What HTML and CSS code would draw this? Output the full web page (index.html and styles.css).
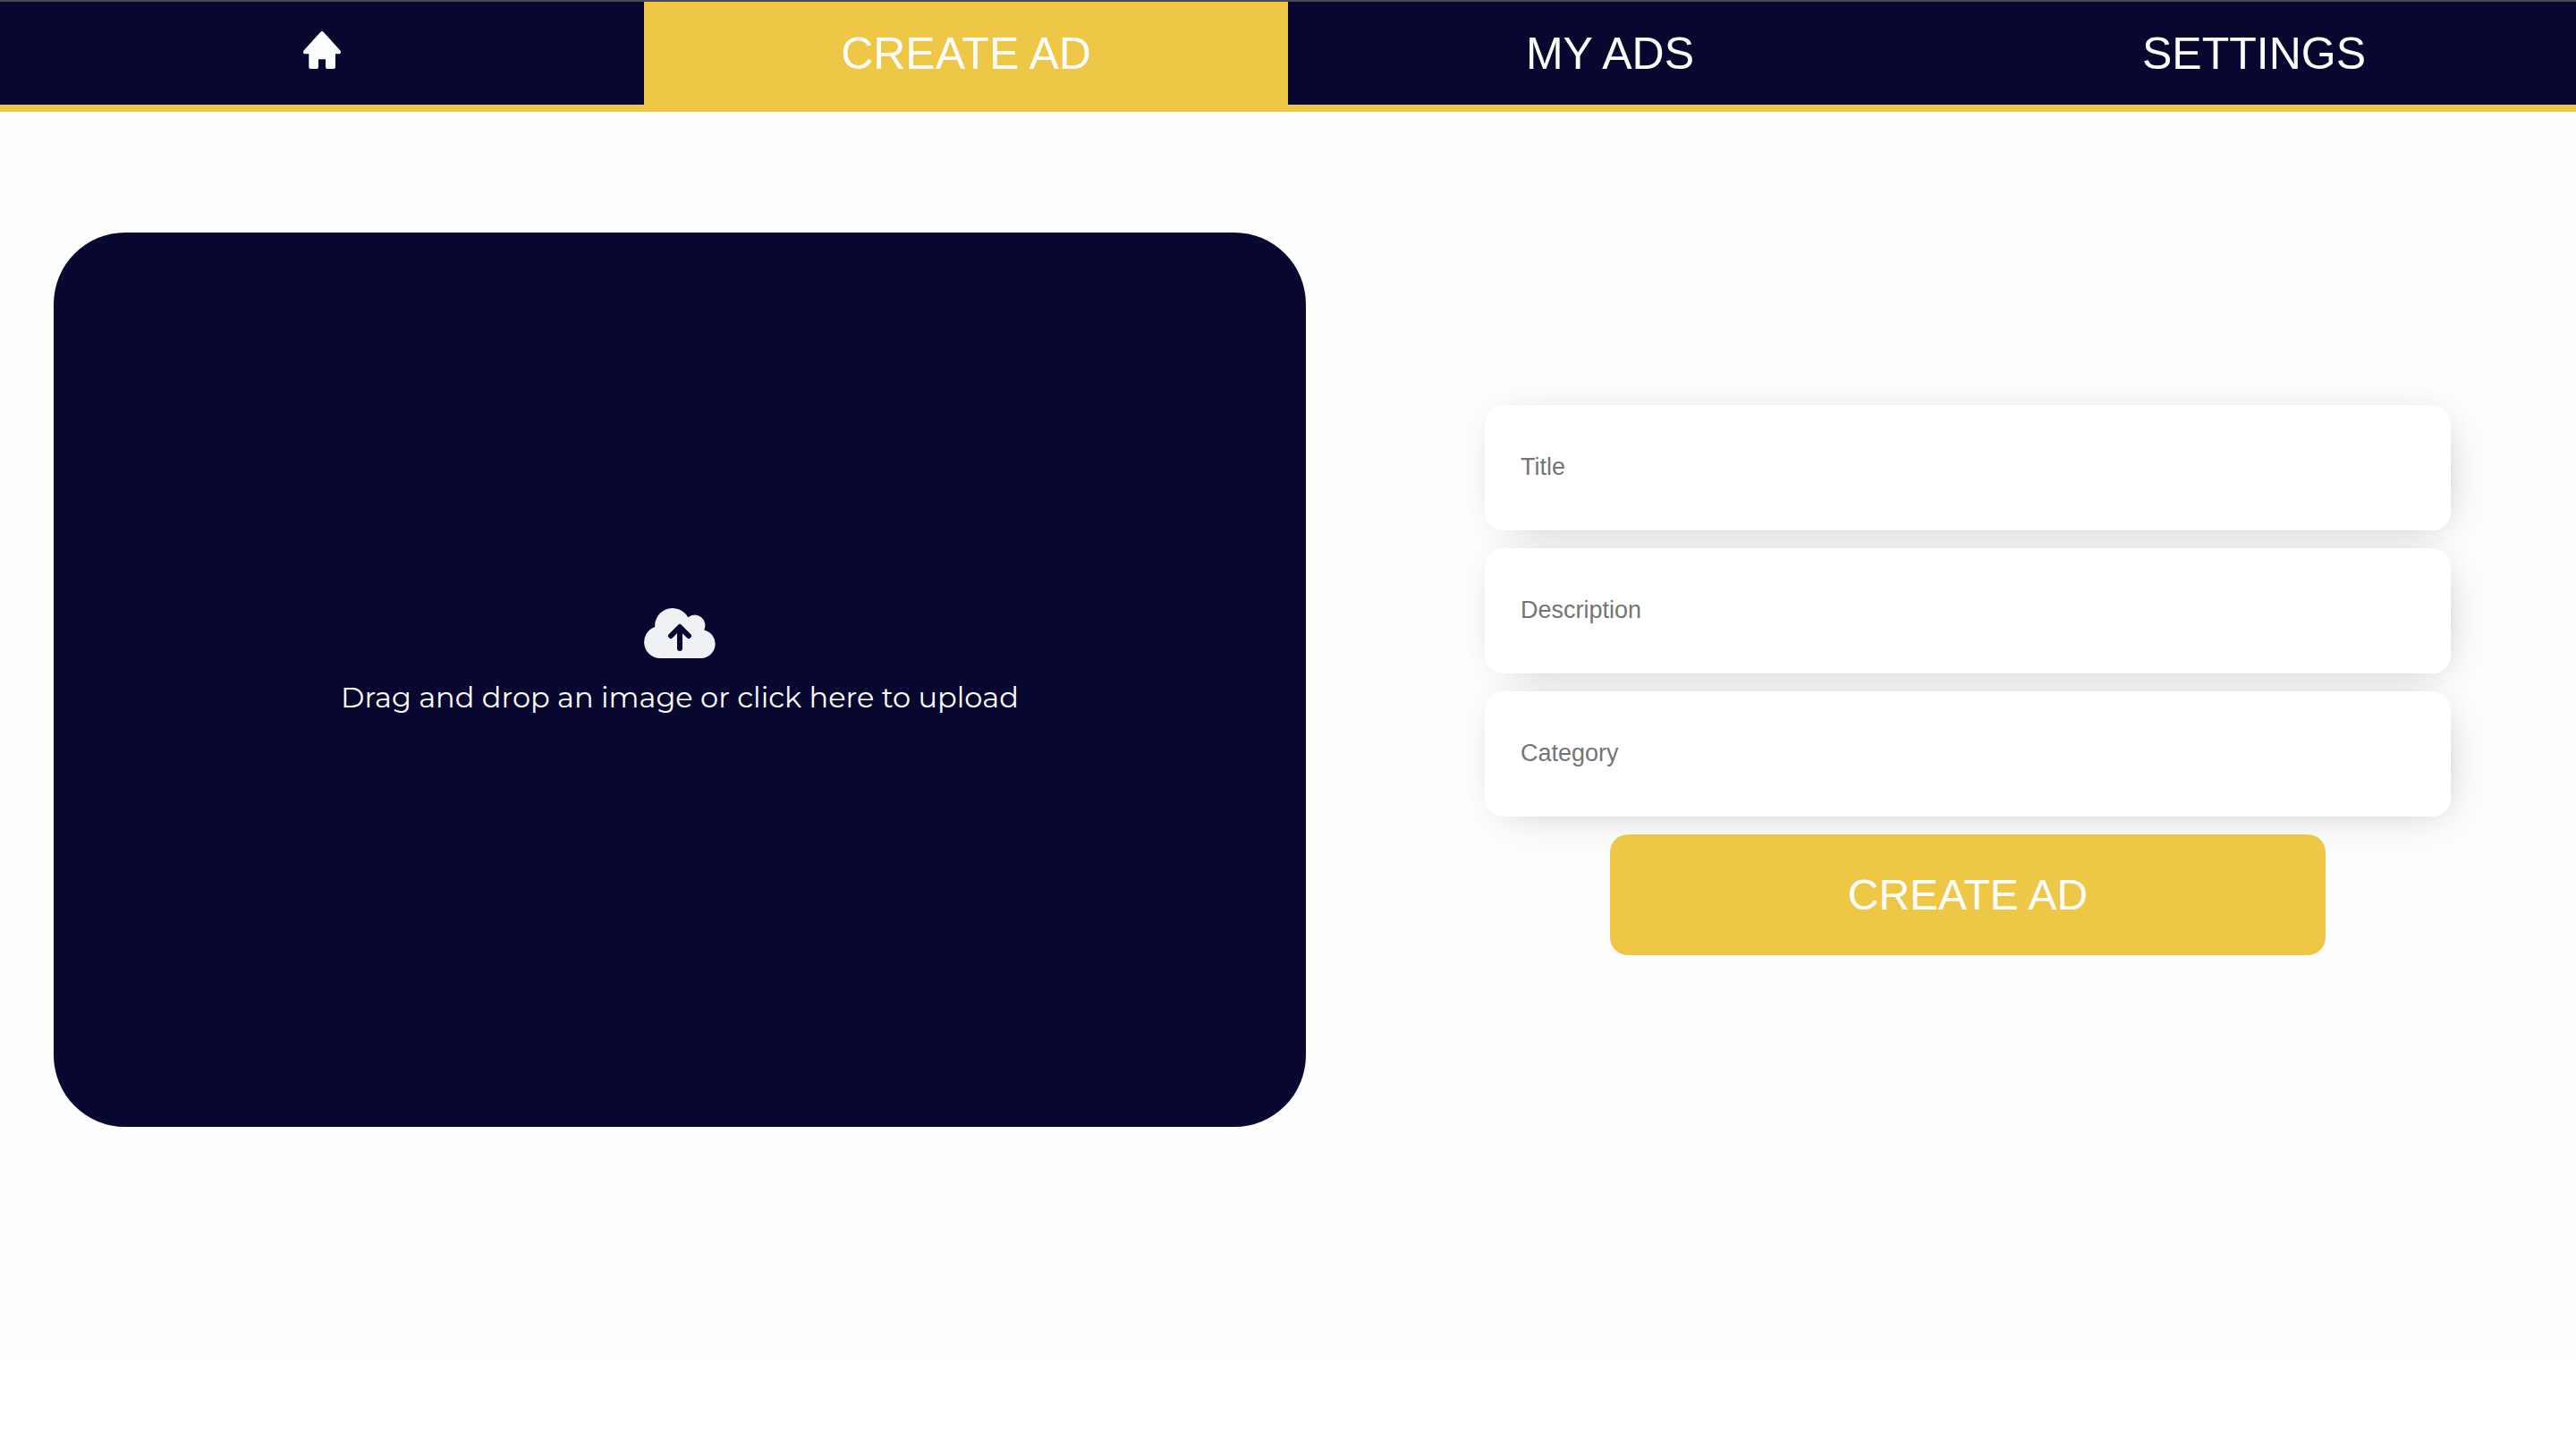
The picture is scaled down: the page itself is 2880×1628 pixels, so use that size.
FILE: index.html
```html
<!DOCTYPE html>
<html lang="en">
<head>
  <meta charset="utf-8">
  <meta name="viewport" content="width=device-width, initial-scale=1">
  <title>Create Ad</title>
  <link rel="stylesheet" href="styles.css">
</head>
<body>
  <nav class="nav">
    <a class="nav-link" href="#home" aria-label="Home">
      <svg class="home-icon" viewBox="0 0 42 50" aria-hidden="true">
        <path d="M19.4.7a2.3 2.3 0 0 1 3.2 0L41.4 21.600c1.200 1.400.5 3.700-1.400 3.700H36V40a2 2 0 0 1-2 2h-7a2 2 0 0 1-2-2v-8.700h-8V40a2 2 0 0 1-2 2H8.300a2 2 0 0 1-2-2V25.300H2C.1 25.300-.6 23 .6 21.600z"/>
      </svg>
    </a>
    <a class="nav-link nav-link-active" href="#create" aria-current="page">CREATE AD</a>
    <a class="nav-link" href="#ads">MY ADS</a>
    <a class="nav-link" href="#settings">SETTINGS</a>
  </nav>
  <main class="content">
    <label class="dropzone">
      <input class="file-input" type="file" accept="image/*">
      <svg class="cloud-icon" viewBox="0 0 80 80" aria-hidden="true">
        <path class="cloud" d="M18 68A18 18 0 0 1 12.200 33 19.800 19.800 0 0 1 49.300 22.200 11.700 11.700 0 0 1 67.200 36.400 16 16 0 0 1 64 68z"/>
        <path class="arrow" d="M40 57V34M30 43L40 33l10 10"/>
      </svg>
      <span class="dropzone-text">Drag and drop an image or click here to upload</span>
    </label>
    <form class="ad-form">
      <input class="field" type="text" placeholder="Title" aria-label="Title">
      <input class="field" type="text" placeholder="Description" aria-label="Description">
      <input class="field" type="text" placeholder="Category" aria-label="Category">
      <button class="submit" type="button">CREATE AD</button>
    </form>
  </main>
</body>
</html>
```
FILE: styles.css
```css
* {
  box-sizing: border-box;
}

body {
  margin: 0;
  background: #fff;
  font-family: Arial, "Liberation Sans", sans-serif;
}

.nav {
  display: grid;
  grid-template-columns: repeat(4, 1fr);
  background: #08072f;
  border-top: 2px solid #4a4a4a;
  border-bottom: 8px solid #eec746;
}

.nav-link {
  display: flex;
  align-items: center;
  justify-content: center;
  height: 115px;
  color: #fdfdfd;
  font-size: 50px;
  text-decoration: none;
}

.nav-link-active {
  background: #eec746;
}

.home-icon {
  width: 42px;
  height: 50px;
  fill: #fdfdfd;
}

.content {
  display: grid;
  grid-template-columns: 19fr 17fr;
  align-items: center;
  padding: 135px 0 258px;
  background: #fdfdfd;
}

.dropzone {
  display: flex;
  flex-direction: column;
  align-items: center;
  justify-content: center;
  gap: 12px;
  height: 1000px;
  margin: 0 60px;
  padding-bottom: 52px;
  border-radius: 80px;
  background: #08072f;
  color: #fdfdfd;
  cursor: pointer;
}

.file-input {
  position: absolute;
  width: 1px;
  height: 1px;
  opacity: 0;
}

.cloud-icon {
  width: 80px;
  height: 80px;
}

.cloud {
  fill: #f0f1f4;
}

.arrow {
  fill: none;
  stroke: #08072f;
  stroke-width: 6;
  stroke-linecap: round;
  stroke-linejoin: round;
}

.dropzone-text {
  font-family: Montserrat, Inter, sans-serif;
  font-size: 32px;
  line-height: 40px;
}

.ad-form {
  display: flex;
  flex-direction: column;
  align-items: center;
  gap: 20px;
  margin: 0 140px;
}

.field {
  width: 100%;
  height: 140px;
  padding: 0 40px;
  border: 0;
  border-radius: 20px;
  background: #fff;
  box-shadow:
    10px 10px 50px -20px rgba(8, 7, 47, 0.22),
    0 0 40px -12px rgba(0, 0, 0, 0.08);
  color: #08072f;
  font-family: inherit;
  font-size: 27px;
}

.field::placeholder {
  color: #757575;
}

.submit {
  width: 800px;
  max-width: 100%;
  height: 135px;
  padding: 0;
  border: 0;
  border-radius: 20px;
  background: #eec746;
  color: #fdfdfd;
  font-family: inherit;
  font-size: 48px;
}
```
